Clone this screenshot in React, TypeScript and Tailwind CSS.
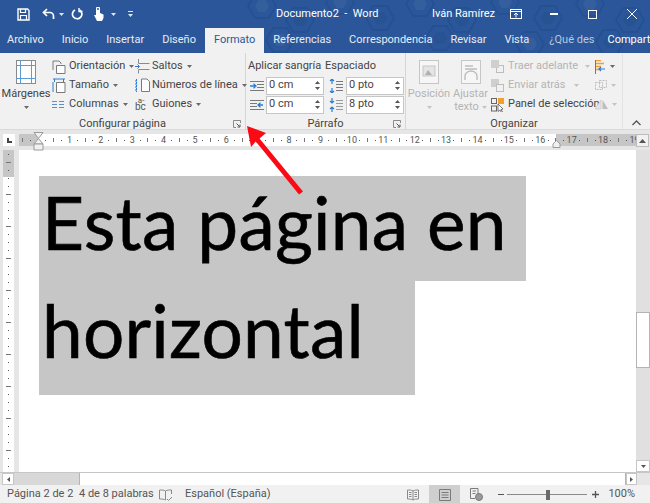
import React from 'react';

const tabs = ['Archivo', 'Inicio', 'Insertar', 'Diseño', 'Formato', 'Referencias', 'Correspondencia', 'Revisar', 'Vista'];
const rulerNumbers = Array.from({ length: 20 }, (_, i) => i);
const verticalMarks = Array.from({ length: 40 }, (_, i) => i);

function Caret({ color = '#6a6a6a', className = '' }: { color?: string; className?: string }) {
  return (
    <svg width="5" height="3" viewBox="0 0 5 3" className={className}>
      <path d="M0 0h5L2.500 3z" fill={color} />
    </svg>
  );
}

function TitleBarPattern() {
  const hexes = [
    [262, 6], [300, 20], [340, 2], [380, 18], [420, 4], [462, 20], [505, 2], [548, 18], [590, 4], [630, 20],
    [280, 40], [440, 38], [530, 44], [610, 42],
  ];
  return (
    <svg className="absolute left-0 top-0 pointer-events-none" width="650" height="53" viewBox="0 0 650 53">
      {hexes.map(([x, y], i) => (
        <g key={i} transform={`translate(${x} ${y})`} fill="none" stroke="#1f4a8a" strokeOpacity="0.55" strokeWidth="1.5">
          <path d="M-14 0l7-12h14l7 12-7 12H-7z" />
          <path d="M-7 0l3.500-6h7l3.500 6-3.500 6h-7z" fill={i % 2 ? '#24508f' : '#3a649f'} fillOpacity="0.6" stroke="none" />
        </g>
      ))}
    </svg>
  );
}

function TitleBar() {
  return (
    <div className="relative h-[28px] flex items-center text-white text-[11px] whitespace-nowrap">
      <div className="w-[276px] flex items-center shrink-0">
        <svg width="13" height="13" viewBox="0 0 13 13" className="ml-[17px]" fill="none" stroke="#fff" strokeWidth="1.4">
          <path d="M1 1h9.500L12 2.500V12H1z" />
          <path d="M3.500 1v3.500h5V1M3.500 12V7.500h6V12" strokeWidth="1.2" />
        </svg>
        <svg width="13" height="12" viewBox="0 0 13 12" className="ml-[12px]" fill="none" stroke="#fff" strokeWidth="1.7">
          <path d="M5 1L1.500 4.500 5 8" />
          <path d="M2 4.500h6a3.500 3.500 0 0 1 3.500 3.500v3" />
        </svg>
        <Caret color="#dfe6f1" className="ml-[4px]" />
        <svg width="12" height="12" viewBox="0 0 12 12" className="ml-[7px]" fill="none" stroke="#fff" strokeWidth="1.7">
          <path d="M4 1.900a4.700 4.700 0 1 0 4.500.100" />
          <path d="M8 0v3.500h3.500" strokeWidth="1.400" />
        </svg>
        <svg width="12" height="14" viewBox="0 0 12 14" className="ml-[10px]" fill="#fff">
          <path d="M3 1.500a2 2 0 0 1 4 0V6l3.500 1.500V11L9 14H4L2 10 1 8l2 0z" />
          <circle cx="5" cy="2" r="1" fill="#2b579a" />
        </svg>
        <Caret color="#dfe6f1" className="ml-[6px]" />
        <div className="ml-[12px] flex flex-col items-center gap-[2px]">
          <div className="w-[5px] h-px bg-[#dfe6f1]" />
          <Caret color="#dfe6f1" />
        </div>
      </div>
      <div className="w-[156px] shrink-0 relative">Documento2 &nbsp;-&nbsp; Word</div>
      <div className="w-[78px] shrink-0 relative">Iván Ramírez</div>
      <svg width="12" height="10" viewBox="0 0 12 10" className="relative shrink-0" fill="none" stroke="#fff">
        <rect x="0.500" y="0.500" width="11" height="9" />
        <path d="M0 2.500h12" />
        <path d="M6 8.500V4M4 6l2-2 2 2" />
      </svg>
      <div className="ml-[28px] w-[8px] h-[1.500px] bg-white relative" />
      <div className="ml-[30px] w-[9px] h-[9px] border border-white relative" />
      <svg width="10" height="10" viewBox="0 0 10 10" className="ml-[30px] relative" stroke="#fff" strokeWidth="1">
        <path d="M0 0l10 10M10 0L0 10" />
      </svg>
    </div>
  );
}

function TabBar() {
  return (
    <div className="relative h-[25px] flex items-stretch text-[11px] text-[#e8edf5] whitespace-nowrap">
      <div className="flex items-stretch -ml-[2px]">
        {tabs.map(tab => (
          <div
            key={tab}
            className={
              tab === 'Formato'
                ? 'px-[8.500px] mx-[0.500px] flex items-center bg-[#f1f1f1] text-[#2b579a]'
                : 'px-[9px] flex items-center'
            }
          >
            {tab}
          </div>
        ))}
      </div>
      <svg width="12" height="16" viewBox="0 0 12 16" className="ml-[8px] self-center" fill="none" stroke="#fff">
        <path d="M3.500 10.500C2 9 1 8 1 5.500a5 5 0 0 1 10 0c0 2.500-1 3.500-2.500 5z" />
        <path d="M4 13h4M5 15h2" />
      </svg>
      <div className="ml-[3px] flex items-center text-[#b9c8df]">¿Qué des</div>
      <svg width="14" height="14" viewBox="0 0 14 14" className="ml-[11px] self-center" fill="none" stroke="#fff" strokeWidth="1.200">
        <circle cx="6" cy="4.500" r="3.500" />
        <path d="M0.700 13c.4-3 2.500-4.700 5.300-4.700M9 11h5M11.500 8.500v5" />
      </svg>
      <div className="ml-[2px] flex items-center text-white">Compartir</div>
    </div>
  );
}

function LauncherIcon({ className = '' }: { className?: string }) {
  return (
    <svg width="8" height="8" viewBox="0 0 8 8" className={className} fill="none" stroke="#8a8a8a">
      <path d="M7.500 3V.5H.5v7H3" />
      <path d="M3.500 3.500l3 3M7 4.500V7H4.500" stroke="#555" />
    </svg>
  );
}

function GroupCaption({ label, launcher }: { label: string; launcher?: boolean }) {
  return (
    <div className="h-[18px] pt-[3px] flex items-center justify-center relative text-[#444]">
      {label}
      {launcher && <LauncherIcon className="absolute right-[4px] top-[6px]" />}
    </div>
  );
}

function RibbonRow({ icon, label, caretClass = 'ml-[4px]', disabled }: { icon: React.ReactNode; label: string; caretClass?: string; disabled?: boolean }) {
  return (
    <div className="h-[19px] flex items-center">
      <div className="w-[17px] h-[16px] shrink-0 flex items-center">{icon}</div>
      <span className={disabled ? 'text-[#b4b4b4]' : 'text-[#444]'}>{label}</span>
      <Caret className={caretClass} color={disabled ? '#c4c4c4' : '#6a6a6a'} />
    </div>
  );
}

function MarginsIcon() {
  return (
    <svg width="20" height="24" viewBox="0 0 20 24" fill="none">
      <rect x="0.500" y="0.500" width="19" height="23" fill="#fff" stroke="#8a8a8a" />
      <path d="M4.500 0v24M15.500 0v24M0 5.500h20M0 18.500h20" stroke="#5b9bd5" />
    </svg>
  );
}

function SpinInput({ value }: { value: string }) {
  return (
    <div className="w-[58px] h-[18px] bg-white border border-[#c6c6c6] flex items-center justify-between pl-[2px] pr-[3px] text-[#444]">
      <span>{value}</span>
      <div className="flex flex-col gap-[3px]">
        <svg width="5" height="3" viewBox="0 0 5 3"><path d="M2.500 0L5 3H0z" fill="#555" /></svg>
        <svg width="5" height="3" viewBox="0 0 5 3"><path d="M0 0h5L2.500 3z" fill="#555" /></svg>
      </div>
    </div>
  );
}

function IndentIcon({ left }: { left?: boolean }) {
  return (
    <svg width="14" height="12" viewBox="0 0 14 12" fill="none">
      <path d={left ? 'M0 1.500h14M0 4.500h7M0 7.500h7M0 10.500h14' : 'M0 1.500h14M7 4.500h7M7 7.500h7M0 10.500h14'} stroke="#7a7a7a" />
      <path d={left ? 'M13 6H8.500M10.500 3.800L8 6l2.500 2.200' : 'M0 6h5M3.500 3.800L6 6 3.500 8.200'} stroke="#2b7cd3" strokeWidth="1.300" />
    </svg>
  );
}

function SpacingIcon({ flip }: { flip?: boolean }) {
  return (
    <svg width="14" height="14" viewBox="0 0 14 14" fill="none">
      <path d="M7 2.500h7M7 5.500h7M7 8.500h7M7 11.500h7" stroke={flip ? '#9a9a9a' : '#7a7a7a'} />
      {flip ? (
        <path d="M3 0v5M1 3l2 2 2-2M3 14V9M1 11l2-2 2 2" stroke="#2b7cd3" strokeWidth="1.200" />
      ) : (
        <path d="M3 5V0M1 2l2-2 2 2M3 9v5M1 12l2 2 2-2" stroke="#2b7cd3" strokeWidth="1.200" />
      )}
    </svg>
  );
}

function ConfigurarGroup() {
  return (
    <div className="w-[246px] shrink-0 flex flex-col border-r border-[#d6d6d6]">
      <div className="flex-1 flex">
        <div className="w-[52px] shrink-0 flex flex-col items-center pt-[7px] text-[#444]">
          <MarginsIcon />
          <span className="mt-[3px] leading-[14px]">Márgenes</span>
          <Caret className="mt-[5px]" />
        </div>
        <div className="w-[83px] shrink-0 pt-[4px]">
          <RibbonRow
            label="Orientación"
            icon={
              <svg width="14" height="14" viewBox="0 0 14 14" fill="none" stroke="#7a7a7a">
                <path d="M1 10V1h6l2 2v1" />
                <path d="M4.500 5.500H13v8H4.500z" fill="#fff" />
              </svg>
            }
          />
          <RibbonRow
            label="Tamaño"
            icon={
              <svg width="14" height="15" viewBox="0 0 14 15" fill="none">
                <path d="M1 1h12M2.500 1v3M11.500 1v3M1 4v10" stroke="#2b7cd3" />
                <path d="M4.500 4.500H13v10H4.500z" stroke="#7a7a7a" fill="#fff" />
              </svg>
            }
          />
          <RibbonRow
            label="Columnas"
            icon={
              <svg width="12" height="10" viewBox="0 0 12 10" stroke="#5b8fd0">
                <path d="M0 1.500h5M7 1.500h5M0 4.500h5M7 4.500h5M0 7.500h5M7 7.500h5" />
              </svg>
            }
          />
        </div>
        <div className="flex-1 pt-[4px]">
          <RibbonRow
            label="Saltos"
            icon={
              <svg width="15" height="15" viewBox="0 0 15 15" fill="none">
                <path d="M3.500 0v4.500h11M3.500 14.500v-4h11" stroke="#8a8a8a" />
                <path d="M0 7.500h4M2.500 5.500l2 2-2 2" stroke="#2b7cd3" />
              </svg>
            }
          />
          <RibbonRow
            label="Números de línea"
            icon={
              <svg width="15" height="15" viewBox="0 0 15 15" fill="none">
                <path d="M6.500 1H12l2.500 2.500v10h-8z" stroke="#7a7a7a" fill="#fff" />
                <path d="M1.500 1v13M0 3h3M0 6h3M0 9h3M0 12h3" stroke="#2b7cd3" strokeDasharray="2 1" />
              </svg>
            }
          />
          <RibbonRow
            label="Guiones"
            icon={
              <span className="flex items-end text-[10px] leading-[10px] text-[#555]">
                bc<span className="text-[8px] leading-[8px] -ml-[8px] mb-[7px]">a-</span>
              </span>
            }
          />
        </div>
      </div>
      <GroupCaption label="Configurar página" launcher />
    </div>
  );
}

function ParrafoGroup() {
  return (
    <div className="w-[160px] shrink-0 flex flex-col border-r border-[#d6d6d6]">
      <div className="flex-1 pt-[4px] pl-[2px] text-[#444]">
        <div className="h-[19px] flex items-center">
          <span className="w-[77px]">Aplicar sangría</span>
          <span>Espaciado</span>
        </div>
        <div className="flex items-center gap-[2px] h-[19px]">
          <div className="w-[16px] pl-[2px]"><IndentIcon /></div>
          <SpinInput value="0 cm" />
          <div className="w-[17px] pl-[2px] ml-[1px]"><SpacingIcon /></div>
          <SpinInput value="0 pto" />
        </div>
        <div className="flex items-center gap-[2px] h-[19px]">
          <div className="w-[16px] pl-[2px]"><IndentIcon left /></div>
          <SpinInput value="0 cm" />
          <div className="w-[17px] pl-[2px] ml-[1px]"><SpacingIcon flip /></div>
          <SpinInput value="8 pto" />
        </div>
      </div>
      <GroupCaption label="Párrafo" launcher />
    </div>
  );
}

function PictureButton({ wrap }: { wrap?: boolean }) {
  return (
    <svg width="20" height="24" viewBox="0 0 20 24" fill="none">
      <rect x="0.500" y="0.500" width="19" height="23" fill="#f6f6f6" stroke="#c6c6c6" />
      {wrap ? (
        <path d="M4 6h8M4 9h12M4 20V16a6 5 0 0 1 12 0v4" stroke="#bdbdbd" strokeWidth="1.400" />
      ) : (
        <>
          <rect x="4" y="6" width="12" height="10" stroke="#c6c6c6" fill="#e4e4e4" />
          <path d="M6 15l3-5 4 5z" fill="#b0b0b0" />
        </>
      )}
    </svg>
  );
}

function StackIcon({ back }: { back?: boolean }) {
  return (
    <svg width="13" height="13" viewBox="0 0 13 13" fill="none">
      {back ? (
        <>
          <rect x="0" y="0" width="8" height="8" fill="#cfcfcf" />
          <rect x="5.500" y="5.500" width="7" height="7" fill="#f1f1f1" stroke="#bdbdbd" />
        </>
      ) : (
        <>
          <rect x="5.500" y="5.500" width="7" height="7" stroke="#bdbdbd" />
          <rect x="0" y="0" width="8" height="8" fill="#cfcfcf" />
        </>
      )}
    </svg>
  );
}

function OrganizarGroup() {
  return (
    <div className="w-[217px] shrink-0 flex flex-col border-r border-[#e4e4e4]">
      <div className="flex-1 flex text-[#b4b4b4]">
        <div className="w-[46px] shrink-0 flex flex-col items-center pt-[7px]">
          <PictureButton />
          <span className="mt-[3px] leading-[14px]">Posición</span>
          <Caret className="mt-[5px]" color="#c4c4c4" />
        </div>
        <div className="w-[37px] shrink-0 flex flex-col items-center pt-[7px]">
          <PictureButton wrap />
          <span className="mt-[3px] leading-[14px]">Ajustar</span>
          <span className="leading-[12px] flex items-center gap-[3px]">texto<Caret color="#c4c4c4" /></span>
        </div>
        <div className="w-[105px] shrink-0 pt-[4px] pl-[2px]">
          <RibbonRow disabled label="Traer adelante" caretClass="ml-[7px]" icon={<StackIcon />} />
          <RibbonRow disabled label="Enviar atrás" caretClass="ml-[8px]" icon={<StackIcon back />} />
          <div className="h-[19px] flex items-center text-[#444]">
            <div className="w-[17px] shrink-0">
              <svg width="14" height="14" viewBox="0 0 14 14" fill="none">
                <rect x="0.500" y="0.500" width="5" height="5" stroke="#666" />
                <rect x="7" y="0" width="6" height="6" fill="#f0a030" />
                <rect x="0.500" y="8" width="5" height="5" stroke="#666" />
                <path d="M7 6l5 5-2 .5 1.500 2.500-1 .5L9 12l-2 1.500z" fill="#fff" stroke="#555" strokeWidth="0.800" />
              </svg>
            </div>
            <span className="whitespace-nowrap">Panel de selección</span>
          </div>
        </div>
        <div className="flex-1 pt-[4px] pl-[1px]">
          <div className="h-[19px] flex items-center gap-[4px]">
            <svg width="11" height="14" viewBox="0 0 11 14" fill="none">
              <path d="M0 .5h6M0 3.500h9M0 6.500h6M0 9.500h4" stroke="#f0a030" strokeWidth="1.500" />
              <path d="M10 9H4M6 7L4 9l2 2" stroke="#2b7cd3" strokeWidth="1.200" />
              <path d="M.5 0v14" stroke="#777" />
            </svg>
            <Caret />
          </div>
          <div className="h-[19px] flex items-center gap-[4px]">
            <svg width="12" height="12" viewBox="0 0 12 12" fill="none" stroke="#bdbdbd" strokeDasharray="2 1">
              <rect x="0.500" y="2.500" width="7" height="7" />
              <rect x="4.500" y="0.500" width="7" height="7" />
            </svg>
            <Caret color="#c4c4c4" />
          </div>
          <div className="h-[19px] flex items-center gap-[4px]">
            <svg width="13" height="11" viewBox="0 0 13 11">
              <path d="M6 1v9H0z" fill="#e4e4e4" stroke="#c6c6c6" strokeWidth="0.700" />
              <path d="M7.500 1v9H13z" fill="#bdbdbd" />
            </svg>
            <Caret color="#c4c4c4" />
          </div>
        </div>
      </div>
      <GroupCaption label="Organizar" />
    </div>
  );
}

function Ribbon() {
  return (
    <div className="relative h-[77px] bg-[#f1f1f1] flex text-[11px] whitespace-nowrap border-b border-[#dadada]">
      <ConfigurarGroup />
      <ParrafoGroup />
      <OrganizarGroup />
      <div className="flex-1 flex items-end justify-center pb-[3px]">
        <svg width="9" height="6" viewBox="0 0 9 6" fill="none" stroke="#555" strokeWidth="1.300">
          <path d="M.5 5l4-4 4 4" />
        </svg>
      </div>
    </div>
  );
}

function HourglassMarker() {
  return (
    <svg className="absolute left-[33px] top-[2px]" width="11" height="19" viewBox="0 0 11 19" fill="none" stroke="#9a9a9a">
      <path d="M1 .5h9L5.500 6.500z" fill="#f1f1f1" />
      <path d="M5.500 6.500L1 12h9z" fill="#f1f1f1" />
      <path d="M1 12h9v6H1z" fill="#f1f1f1" />
    </svg>
  );
}

function RulerRow() {
  return (
    <div className="relative h-[20px] bg-[#e6e6e6] flex items-start pt-[4px]">
      <div className="ml-[3px] w-[12px] h-[12px] bg-white flex items-center justify-center">
        <div className="w-[5px] h-[5px] border-l-2 border-b-2 border-[#444]" />
      </div>
      <div className="ml-[4px] w-[617px] h-[12px] overflow-hidden bg-[linear-gradient(90deg,#c6c6c6_19px,#fff_19px,#fff_537px,#c6c6c6_537px)] flex items-center text-[9px] leading-[12px] text-[#555]">
        {rulerNumbers.map(n => (
          <div key={n} className={`w-[31.400px] shrink-0 grid grid-cols-4 items-center justify-items-center ${n === 0 ? '-ml-[0.600px]' : ''}`}>
            <span className="w-px h-[4px] bg-[#777]" />
            <span className="w-px h-px bg-[#555]" />
            <span>{n === 0 ? '' : n}</span>
            <span className="w-px h-px bg-[#555]" />
          </div>
        ))}
      </div>
      <div className="w-[13px] h-[13px] bg-[#f1f1f1] border border-[#bdbdbd] flex items-center justify-center">
        <svg width="7" height="4" viewBox="0 0 7 4"><path d="M3.500 0L7 4H0z" fill="#555" /></svg>
      </div>
      <HourglassMarker />
      <svg className="absolute left-[552px] top-[10px]" width="9" height="8" viewBox="0 0 9 8" fill="#f1f1f1" stroke="#9a9a9a">
        <path d="M4.500 .5L8 4v3.500H1V4z" />
      </svg>
    </div>
  );
}

function VerticalRuler() {
  return (
    <div className="ml-[3px] w-[11px] shrink-0 h-full bg-[linear-gradient(180deg,#c6c6c6_27px,#fff_27px)] overflow-hidden">
      {verticalMarks.map(i => (
        <div key={i} className="h-[8px] flex items-center justify-center">
          <span className={i % 4 === 1 ? 'w-[5px] h-px bg-[#777]' : 'w-px h-px bg-[#555]'} />
        </div>
      ))}
    </div>
  );
}

function Page() {
  return (
    <div className="ml-[5px] w-[617px] h-[322px] bg-white pt-[26px] pl-[20px] font-['Lato',sans-serif] text-[73px] tracking-[0.2px] text-black [-webkit-text-stroke:0.6px_#000]">
      <div className="w-[487px] h-[105px] bg-[#c6c6c6] pl-[3px] leading-[93px] whitespace-nowrap">Esta página en</div>
      <div className="w-[376px] h-[114px] bg-[#c6c6c6] pl-[3px] leading-[98px] whitespace-nowrap">horizontal</div>
    </div>
  );
}

function VerticalScrollbar() {
  return (
    <div className="flex-1 h-full bg-[#e0e0e0] flex flex-col pt-[162px]">
      <div className="h-[56px] bg-white border border-[#b4b4b4]" />
      <div className="flex-1" />
      <div className="h-[12px] bg-white border border-[#c6c6c6] flex items-center justify-center">
        <Caret color="#555" />
      </div>
    </div>
  );
}

function HorizontalScrollbar() {
  return (
    <div className="h-[12px] bg-[#e6e6e6] flex pl-[2px] border-t border-[#c6c6c6] box-content">
      <div className="w-[12px] bg-white border border-[#c6c6c6] flex items-center justify-center">
        <svg width="3" height="5" viewBox="0 0 3 5"><path d="M3 0v5L0 2.500z" fill="#555" /></svg>
      </div>
      <div className="w-[65px] bg-[#d8d8d8]" />
      <div className="flex-1 bg-white border-x border-[#b4b4b4]" />
      <div className="w-[11px] bg-white border border-[#c6c6c6] flex items-center justify-center">
        <svg width="3" height="5" viewBox="0 0 3 5"><path d="M0 0v5l3-2.500z" fill="#555" /></svg>
      </div>
      <div className="w-[13px]" />
    </div>
  );
}

function StatusBar() {
  return (
    <div className="h-[19px] bg-[#f1f1f1] flex items-center text-[11px] text-[#555] whitespace-nowrap">
      <span className="ml-[7px] w-[57px]">Página 2 de 2</span>
      <span className="ml-[15px] w-[65px]">4 de 8 palabras</span>
      <svg width="13" height="12" viewBox="0 0 13 12" fill="none" stroke="#8a8a8a" className="ml-[15px]">
        <path d="M6.500 2v9C5 10 3 10 .5 10V1C3 1 5 1 6.500 2zM6.500 2C8 1 10 1 12.500 1v4M8 10l1.500 1.500L13 8" />
      </svg>
      <span className="ml-[13px]">Español (España)</span>
      <div className="flex-1" />
      <svg width="12" height="12" viewBox="0 0 12 12" fill="none" stroke="#8a8a8a">
        <path d="M6 2v9C4.500 10 2.500 10 .5 10V1C2.500 1 4.500 1 6 2zM6 2c1.500-1 3.500-1 5.500-1v9c-2 0-4 0-5.500 1M2 3.500h2.500M2 5.500h2.500M2 7.500h2.500M7.500 3.500H10M7.500 5.500H10M7.500 7.500H10" />
      </svg>
      <div className="ml-[10px] w-[31px] h-full bg-[#cfcfcf] flex items-center justify-center">
        <svg width="12" height="12" viewBox="0 0 12 12" fill="none" stroke="#7a7a7a">
          <path d="M.5 .5h11v11H.5zM2.500 3.500h7M2.500 6h7M2.500 8.500h7" />
        </svg>
      </div>
      <svg width="13" height="13" viewBox="0 0 13 13" fill="none" stroke="#7a7a7a" className="ml-[10px]">
        <path d="M8 6V.5H.5v10H5M2.500 3h3.500M2.500 5.500h3" />
        <circle cx="9" cy="9" r="3.500" fill="#9a9a9a" />
      </svg>
      <div className="ml-[15px] w-[6px] h-[1.500px] bg-[#555]" />
      <div className="ml-[3px] w-[80px] h-[12px] relative flex items-center">
        <div className="w-full h-px bg-[#8a8a8a]" />
        <div className="absolute left-[39px] top-[1px] w-[4px] h-[10px] bg-[#6a6a6a]" />
      </div>
      <svg width="7" height="7" viewBox="0 0 7 7" stroke="#555" strokeWidth="1.300" className="ml-[5px]">
        <path d="M0 3.500h7M3.500 0v7" />
      </svg>
      <span className="ml-[9px] mr-[15px]">100%</span>
    </div>
  );
}

function PointerArrow() {
  return (
    <svg className="absolute left-0 top-0 pointer-events-none" width="650" height="503" viewBox="0 0 650 503">
      <path d="M247 126L266 133 259.500 138.500 303 191.500 299 194.500 255.800 141.500 251 147z" fill="#fa0a14" />
    </svg>
  );
}

export default function App() {
  return (
    <div className="relative w-[650px] h-[503px] overflow-hidden bg-[#e6e6e6] font-['Roboto',sans-serif]">
      <div className="relative bg-[#2b579a]">
        <TitleBarPattern />
        <TitleBar />
        <TabBar />
      </div>
      <Ribbon />
      <RulerRow />
      <div className="h-[322px] flex">
        <VerticalRuler />
        <Page />
        <VerticalScrollbar />
      </div>
      <HorizontalScrollbar />
      <StatusBar />
      <PointerArrow />
    </div>
  );
}
